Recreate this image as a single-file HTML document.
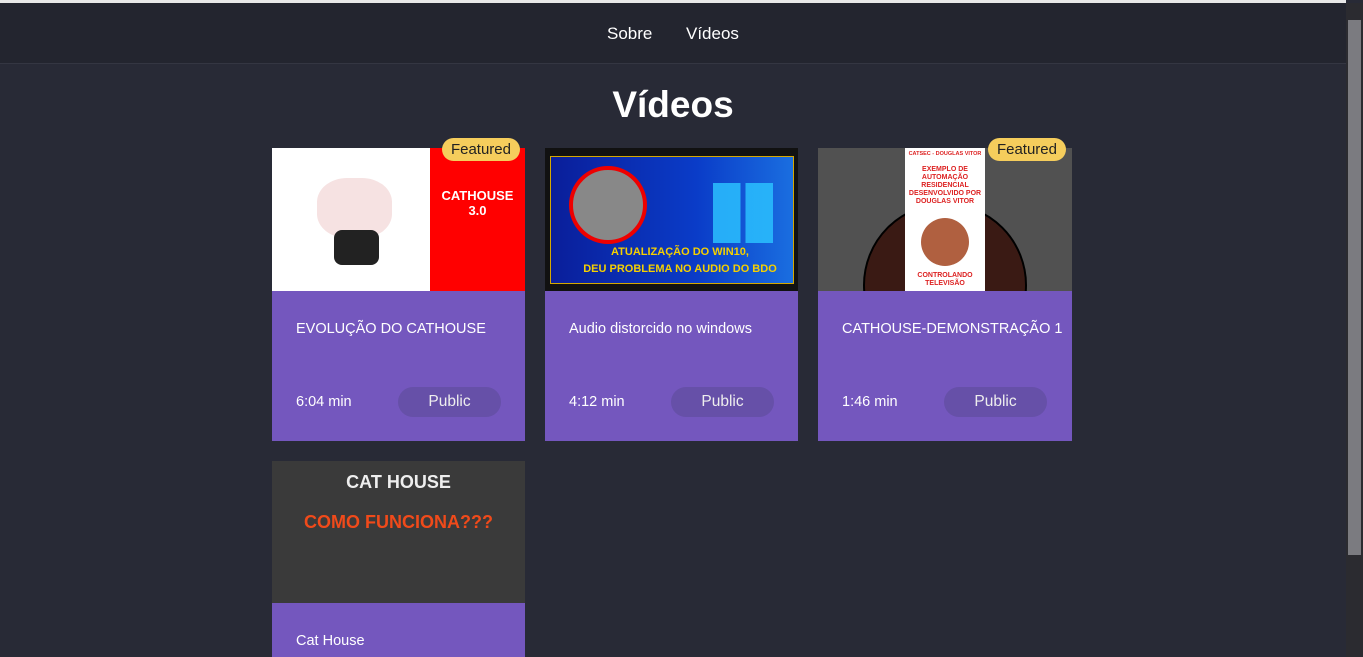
<!DOCTYPE html><html style="overflow:hidden;height:657px"><head><style>
body{margin:0;width:1363px;height:657px;overflow:hidden;background:#282a36;font-family:"Liberation Sans",sans-serif;position:relative}
.top{position:absolute;left:0;top:0;width:1346px;height:3px;background:#e8e8e8}
.hdr{position:absolute;left:0;top:3px;width:1346px;height:60px;background:#23252f;border-bottom:1px solid #343642}
.hdr span{position:absolute;top:21px;color:#fff;font-size:17px}
h1{position:absolute;left:0;width:1346px;top:84px;margin:0;text-align:center;color:#fff;font-size:37px;font-weight:bold}
.card{position:absolute;width:253px;height:293px}
.img{position:absolute;left:0;top:0;width:253px;height:143px;overflow:hidden}
.body{position:absolute;left:0;top:143px;width:253px;height:150px;background:#7457be;color:#fff}
.t{position:absolute;left:24px;top:30px;font-size:14.5px}
.d{position:absolute;left:24px;top:103px;font-size:14.5px}
.p{position:absolute;left:126px;top:96px;width:103px;height:30px;border-radius:15px;background:#6650a8;text-align:center;line-height:30px;font-size:15.5px;color:#eee}
.f{position:absolute;top:-10px;right:5px;background:#f5cd5c;border-radius:12px;padding:3px 9px;font-size:15px;color:#222;z-index:2}
.sb{position:absolute;left:1346px;top:3px;width:17px;height:654px;background:#2b2b30}
.th{position:absolute;left:1348px;top:20px;width:13px;height:535px;background:#7b7b80}
</style></head><body>
<div class="top"></div>
<div class="hdr"><span style="left:607px">Sobre</span><span style="left:686px">Vídeos</span></div>
<h1>Vídeos</h1>
<div class="card" style="left:272px;top:148px">
<div class="f">Featured</div>
<div class="img" style="background:#fff"><div style="position:absolute;left:158px;top:0;width:95px;height:143px;background:#f00;color:#fff;font-weight:bold;font-size:13px;text-align:center;padding-top:40px;box-sizing:border-box">CATHOUSE<br>3.0</div>
<div style="position:absolute;left:45px;top:30px;width:75px;height:60px;border-radius:40%;background:#f6e2e2"></div>
<div style="position:absolute;left:62px;top:82px;width:45px;height:35px;background:#222;border-radius:8px"></div></div>
<div class="body"><div class="t">EVOLUÇÃO DO CATHOUSE</div><div class="d">6:04 min</div><div class="p">Public</div></div></div>
<div class="card" style="left:545px;top:148px">
<div class="img" style="background:#111"><div style="position:absolute;left:5px;top:8px;width:242px;height:126px;background:linear-gradient(90deg,#0a1e9a,#0a3cc8 60%,#1a6ee0);border:1px solid #d4a800"></div>
<div style="position:absolute;left:24px;top:18px;width:70px;height:70px;border:4px solid #e00;border-radius:50%;background:#888"></div>
<div style="position:absolute;left:168px;top:35px;width:60px;height:60px;background:linear-gradient(90deg,#2ac0ff 46%,transparent 46%,transparent 54%,#2ac0ff 54%);opacity:.85"></div>
<div style="position:absolute;left:20px;top:96px;width:230px;color:#f5d000;font-weight:bold;font-size:11px;text-align:center;line-height:17px;white-space:nowrap">ATUALIZAÇÃO DO WIN10,<br>DEU PROBLEMA NO AUDIO DO BDO</div></div>
<div class="body"><div class="t">Audio distorcido no windows</div><div class="d">4:12 min</div><div class="p">Public</div></div></div>
<div class="card" style="left:818px;top:148px">
<div class="f">Featured</div>
<div class="img" style="background:#515151;width:254px"><div style="position:absolute;left:45px;top:55px;width:160px;height:160px;border-radius:50%;background:#3a1a14;border:2px solid #000"></div>
<div style="position:absolute;left:87px;top:0;width:80px;height:143px;background:#fff;color:#d22;font-size:7px;font-weight:bold;text-align:center;line-height:8px;padding-top:2px"><div style="font-size:5.5px">CATSEC - DOUGLAS VITOR</div><br>EXEMPLO DE AUTOMAÇÃO RESIDENCIAL DESENVOLVIDO POR DOUGLAS VITOR<div style="width:48px;height:48px;border-radius:50%;background:#b06040;margin:12px auto 6px"></div>CONTROLANDO TELEVISÃO</div></div>
<div class="body" style="width:254px"><div class="t">CATHOUSE-DEMONSTRAÇÃO 1</div><div class="d">1:46 min</div><div class="p">Public</div></div></div>
<div class="card" style="left:272px;top:461px;height:196px;overflow:hidden">
<div class="img" style="background:#3a3a3a;height:142px"><div style="position:absolute;width:253px;top:11px;text-align:center;color:#eee;font-weight:bold;font-size:18px">CAT HOUSE</div>
<div style="position:absolute;width:253px;top:51px;text-align:center;color:#f04a1a;font-weight:bold;font-size:18px">COMO FUNCIONA???</div></div>
<div class="body" style="top:142px;height:54px"><div class="t" style="top:30px">Cat House</div></div></div>
<div class="sb"></div><div class="th"></div>
</body></html>
